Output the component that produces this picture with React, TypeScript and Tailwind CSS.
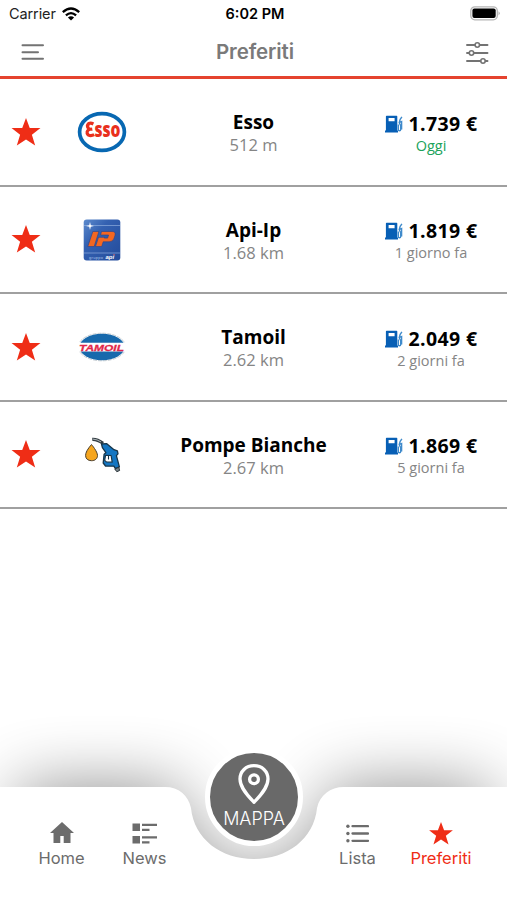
import type { ReactNode } from "react";

type Station = {
    name: string;
    distance: string;
    price: string;
    updated: string;
    today?: boolean;
    logo: ReactNode;
};

function StarIcon({ className }: { className: string }) {
    return (
        <svg viewBox="0 0 30 29" className={className} fill="currentColor">
            <path d="M15 0l3.9 10.3H30l-8.9 7L24.5 28.5 15 22.2 5.5 28.5l3.4-11.2L0 10.3h11.1z" />
        </svg>
    );
}

function PumpIcon() {
    return (
        <svg viewBox="0 0 18 18" className="h-[18px] w-[18px]">
            <path
                fill="#075fb5"
                fillRule="evenodd"
                d="M1.6 0.8h10q.7 0 .7.8v14h.7v1.8H0v-1.8h.9v-14q0-.8.7-.8zM3.6 3v3.2h6V3z"
            />
            <path
                d="M12.6 10.2h.7v4.3q0 1.2 1.2 1.2t1.2-1.2v-3.7l-1.5-3 1-3.5 1.7-2.5M14.6 7.4l2-.9v8"
                fill="none"
                stroke="#3f8acb"
                strokeWidth="1.4"
            />
        </svg>
    );
}

function EssoLogo() {
    return (
        <svg viewBox="0 0 50 42" className="h-[42px] w-[50px]">
            <ellipse
                cx="25"
                cy="21"
                rx="22.4"
                ry="18.4"
                fill="white"
                stroke="#0868b2"
                strokeWidth="3.7"
            />
            <path
                d="M16.4 13q-2.4-1.3-4.6-.5-2.6 2.4-.1 5.2 1.3.8 3.6.4M13 18q-4.8 2.3-1.8 5.9 2.7 1.6 6-.2"
                fill="none"
                stroke="#e9301d"
                strokeWidth="3.2"
            />
            <text
                x="17.4"
                y="25.8"
                fontFamily="Open Sans, sans-serif"
                fontSize="20.5"
                fontWeight="800"
                fill="#e9301d"
                textLength="26"
                lengthAdjust="spacingAndGlyphs"
            >
                sso
            </text>
        </svg>
    );
}

function IpLogo() {
    return (
        <svg viewBox="0 0 38 42" className="h-[42px] w-[38px]">
            <defs>
                <linearGradient id="ip-bg" x1="0" y1="0" x2="1" y2="1">
                    <stop offset="0" stopColor="#5d8bcd" />
                    <stop offset="0.35" stopColor="#3461b1" />
                    <stop offset="1" stopColor="#234b9b" />
                </linearGradient>
            </defs>
            <rect x="0.7" y="0.5" width="36.6" height="41" rx="3" fill="url(#ip-bg)" />
            <path d="M1 6.5h36M1 34h36" stroke="#9dbbe5" strokeWidth="0.6" />
            <path
                d="M7 3l.8 3.2L11 7l-3.2.8L7 11l-.8-3.2L3 7l3.2-.8z"
                fill="white"
            />
            <path
                fill="#f26722"
                stroke="#23428e"
                strokeWidth="0.6"
                fillRule="evenodd"
                d="M9.8 12.5h6.1L11.2 27.5H4.8zM18.5 12.5H29q4 0 3 3.8l-.8 2.7q-1 3.8-5 3.8h-6l-1.5 4.7h-6.2l3-9.2h6l-.2.8h3.3l1-3.1h-8z"
            />
            <text
                x="6"
                y="39.7"
                fontFamily="Liberation Sans, sans-serif"
                fontSize="4"
                fill="#a9c2e8"
                textLength="14"
            >
                gruppo
            </text>
            <text
                x="22.5"
                y="39.6"
                fontFamily="Liberation Sans, sans-serif"
                fontSize="6"
                fontWeight="700"
                fontStyle="italic"
                fill="white"
            >
                api
            </text>
            <circle cx="31" cy="35.8" r="0.7" fill="#ed5f61" />
        </svg>
    );
}

function TamoilLogo() {
    return (
        <svg viewBox="0 0 50 30" className="h-[30px] w-[50px]">
            <ellipse
                cx="25"
                cy="15"
                rx="23.8"
                ry="13.8"
                fill="white"
                stroke="#aeb8bf"
                strokeWidth="0.7"
                strokeDasharray="4 1"
            />
            <ellipse cx="25" cy="15" rx="22.7" ry="13.2" fill="#1769ac" />
            <path d="M0 10.8h50v8.7H0z" fill="white" />
            <text
                x="2"
                y="18.6"
                fontFamily="Liberation Sans, sans-serif"
                fontSize="9.8"
                fontWeight="700"
                fontStyle="italic"
                fill="#e1264a"
                stroke="#e1264a"
                strokeWidth="0.3"
                textLength="45"
                lengthAdjust="spacingAndGlyphs"
            >
                TAMOIL
            </text>
        </svg>
    );
}

function NozzleLogo() {
    return (
        <svg viewBox="0 0 40 38" className="h-[38px] w-[40px]" strokeLinejoin="round">
            <path
                d="M9.5 8.5Q3.4 15.5 3.6 19.5c0 3.4 2.5 5.2 5.9 5.2s6-1.8 6-5.2c0-4-6-11-6-11z"
                fill="#f5a51e"
                stroke="#493d2b"
                strokeWidth="1"
            />
            <path
                d="M10.3 3.3q5-.3 10.7 4"
                fill="none"
                stroke="#333d43"
                strokeWidth="3.3"
            />
            <path d="M11 3.1q4 .2 8 2.8" fill="none" stroke="#aeb6b9" strokeWidth="1" />
            <path
                d="M19.5 8L24.8 7.7 32 13.7l3.4 1.2.6 3-1.6 1.7 3 11.3-4 1.8-1.5-2.5-8.4-.2-2.3-3 .9-8.8 1.8-1.5-3.5-5z"
                fill="#1476c2"
                stroke="#173549"
                strokeWidth="1.3"
            />
            <path
                d="M23.5 19.3l5.6.2 1.1 6.7-5.8-.3-1.7-1.5z"
                fill="white"
                stroke="#173549"
                strokeWidth="1.2"
            />
            <path d="M26.5 20v3.5" fill="none" stroke="#173549" strokeWidth="1.1" />
            <path
                d="M32.8 33l4-1.7.8 3.2-2.8 1.2z"
                fill="#7d898e"
                stroke="#293238"
                strokeWidth="1"
            />
        </svg>
    );
}

const stations: Station[] = [
    {
        name: "Esso",
        distance: "512 m",
        price: "1.739 €",
        updated: "Oggi",
        today: true,
        logo: <EssoLogo />,
    },
    {
        name: "Api-Ip",
        distance: "1.68 km",
        price: "1.819 €",
        updated: "1 giorno fa",
        logo: <IpLogo />,
    },
    {
        name: "Tamoil",
        distance: "2.62 km",
        price: "2.049 €",
        updated: "2 giorni fa",
        logo: <TamoilLogo />,
    },
    {
        name: "Pompe Bianche",
        distance: "2.67 km",
        price: "1.869 €",
        updated: "5 giorni fa",
        logo: <NozzleLogo />,
    },
];

function StatusBar() {
    return (
        <div className="grid h-7 grid-cols-3 items-center pr-[6px] pl-[9px] text-black">
            <div className="flex items-center gap-[6px]">
                <span className="text-[14.5px] tracking-[-0.1px] text-[#222]">Carrier</span>
                <svg viewBox="0 0 18 14" className="h-[14px] w-[18px]">
                    <g fill="none" stroke="black" strokeWidth="2.3">
                        <path d="M0.8 5.1q8.2-7.3 16.4 0" />
                        <path d="M3.9 8.4q5.1-4.5 10.2 0" />
                    </g>
                    <path d="M5.9 10.4q3.1-2.5 6.2 0L9 13.5z" />
                </svg>
            </div>
            <span className="text-center text-[14.5px] font-semibold">6:02 PM</span>
            <svg viewBox="0 0 31 15" className="mb-[2px] h-[15px] w-[31px] justify-self-end">
                <rect x="0.8" y="0.8" width="26.5" height="13" rx="4" fill="#fff" stroke="#b5b5b5" strokeWidth="1.3" />
                <rect x="2.4" y="2.5" width="23.3" height="9.6" rx="2" />
                <path d="M28.5 5.2q2.6 2.1 0 4.3z" fill="#b5b5b5" />
            </svg>
        </div>
    );
}

function StationRow({ station }: { station: Station }) {
    return (
        <li className="flex h-[107.5px] items-center border-b-2 border-[#a0a0a0]">
            <div className="flex w-[52px] justify-center text-[#ef2d16]">
                <StarIcon className="h-[28px] w-[30px]" />
            </div>
            <div className="flex w-[100px] justify-center pt-px">{station.logo}</div>
            <div className="flex w-[203px] flex-col items-center pt-[3px]">
                <h2 className="font-['Open_Sans',sans-serif] text-[19px] leading-6 font-bold text-black">
                    {station.name}
                </h2>
                <p className="font-['Open_Sans',sans-serif] text-[16.5px] leading-[22px] text-[#858585]">
                    {station.distance}
                </p>
            </div>
            <div className="flex w-[152px] flex-col items-center pt-[4px]">
                <div className="flex items-center gap-[6px]">
                    <PumpIcon />
                    <span className="font-['Open_Sans',sans-serif] text-[19.5px] leading-6 font-bold tracking-[0.35px] text-black">
                        {station.price}
                    </span>
                </div>
                <p
                    className={
                        station.today
                            ? "font-['Open_Sans',sans-serif] text-[14.5px] leading-5 text-[#20a35b]"
                            : "font-['Open_Sans',sans-serif] text-[14.5px] leading-5 text-[#858585]"
                    }
                >
                    {station.updated}
                </p>
            </div>
        </li>
    );
}

function TabItem({
    label,
    active,
    children,
}: {
    label: string;
    active?: boolean;
    children: ReactNode;
}) {
    return (
        <a
            href="#"
            className={
                active
                    ? "flex w-[84px] flex-col items-center gap-[2px] text-[#ef2d16]"
                    : "flex w-[83px] flex-col items-center gap-[2px] text-[#6c6c6c]"
            }
        >
            <div className="flex h-6 items-center">{children}</div>
            <span className="text-[16.5px] leading-[22px]">{label}</span>
        </a>
    );
}

function TabBar() {
    return (
        <nav className="relative h-[220px]">
            <svg
                viewBox="0 0 507 220"
                className="absolute inset-0 h-[220px] w-[507px] overflow-visible"
            >
                <defs>
                    <filter
                        id="bar-shadow"
                        filterUnits="userSpaceOnUse"
                        x="-150"
                        y="-80"
                        width="807"
                        height="520"
                    >
                        <feGaussianBlur stdDeviation="34" />
                    </filter>
                </defs>
                <path
                    d="M18 107h150c8 0 12 8 14 21 4 40 34 68 72 68s68-28 72-68c2-13 6-21 14-21h149v170H18z"
                    filter="url(#bar-shadow)"
                    opacity="0.44"
                />
                <path
                    d="M0 107h165c14 0 23 8 26 21C194 159 221 179 254 179s60-20 63-51c3-13 13-21 27-21h163v113H0z"
                    fill="white"
                />
            </svg>
            <div className="relative flex h-full items-end justify-between px-[20px] pb-[31px]">
                <div className="flex">
                    <TabItem label="Home">
                        <svg viewBox="0 0 24 22" className="h-[22px] w-6" fill="currentColor">
                            <path d="M12 0L0 11h3.5v10h6.8v-7h3.4v7h6.8V11H24z" />
                        </svg>
                    </TabItem>
                    <TabItem label="News">
                        <svg viewBox="0 0 26 21" className="h-[21px] w-[26px]" fill="currentColor">
                            <path d="M0.5 0.5h7.5v7.5H0.5zM0.5 13h7.5v7.5H0.5zM10 0.7h15v2.3H10zM10 5.8h7.5v2.3H10zM10 13.2h15v2.3H10zM10 18.2h7.5v2.3H10z" />
                        </svg>
                    </TabItem>
                </div>
                <div className="flex pr-[4px]">
                    <TabItem label="Lista">
                        <svg viewBox="0 0 23 19" className="h-[19px] w-[23px]">
                            <path
                                d="M6.5 2.2H22M6.5 9.5H22M6.5 16.8H22"
                                stroke="currentColor"
                                strokeWidth="2.3"
                                strokeLinecap="round"
                            />
                            <g fill="currentColor">
                                <circle cx="1.9" cy="2.2" r="1.7" />
                                <circle cx="1.9" cy="9.5" r="1.7" />
                                <circle cx="1.9" cy="16.8" r="1.7" />
                            </g>
                        </svg>
                    </TabItem>
                    <TabItem label="Preferiti" active>
                        <StarIcon className="h-[23px] w-6" />
                    </TabItem>
                </div>
            </div>
            <button className="absolute top-[68px] left-[205px] flex h-[98px] w-[98px] flex-col items-center rounded-full border-[5px] border-white bg-[#696969] pt-[11px] text-white">
                <svg
                    viewBox="0 0 32 40"
                    className="h-[40px] w-[32px]"
                    fill="none"
                    stroke="white"
                    strokeWidth="3.3"
                    strokeLinejoin="round"
                >
                    <path d="M16 1.7C8 1.7 2 7.3 2 15c0 9 8.5 17.5 14 23.3C21.5 32.5 30 24 30 15 30 7.3 24 1.7 16 1.7z" />
                    <circle cx="16" cy="15.3" r="4.4" />
                </svg>
                <span className="mt-[4px] text-[18px] leading-[22px] font-light">MAPPA</span>
            </button>
        </nav>
    );
}

export default function App() {
    return (
        <div className="flex h-[900px] w-[507px] flex-col overflow-hidden bg-white font-['Inter',sans-serif]">
            <StatusBar />
            <header className="flex h-[51px] items-center justify-between border-b-[3px] border-[#e5432f] pr-[18px] pl-[20px]">
                <svg viewBox="0 0 24 18" className="h-[18px] w-6">
                    <path
                        d="M2.5 2.3h20.5M2.5 9.3h15.5M2.5 15.8h20.5"
                        stroke="#737373"
                        strokeWidth="2"
                        strokeLinecap="round"
                    />
                </svg>
                <h1 className="text-[20.5px] font-semibold tracking-[-0.1px] text-[#7a7a7a]">
                    Preferiti
                </h1>
                <svg viewBox="0 0 23 22" className="mt-px h-[22px] w-[23px]">
                    <path
                        d="M1 3h20.5M1 11h20.5M1 19h20.5"
                        stroke="#737373"
                        strokeWidth="1.9"
                        strokeLinecap="round"
                    />
                    <g fill="white" stroke="#737373" strokeWidth="1.6">
                        <circle cx="11.3" cy="3" r="2.2" />
                        <circle cx="5.5" cy="11" r="2.2" />
                        <circle cx="17" cy="19" r="2.2" />
                    </g>
                </svg>
            </header>
            <main className="flex-1">
                <ul>
                    {stations.map((station) => (
                        <StationRow key={station.name} station={station} />
                    ))}
                </ul>
            </main>
            <TabBar />
        </div>
    );
}
